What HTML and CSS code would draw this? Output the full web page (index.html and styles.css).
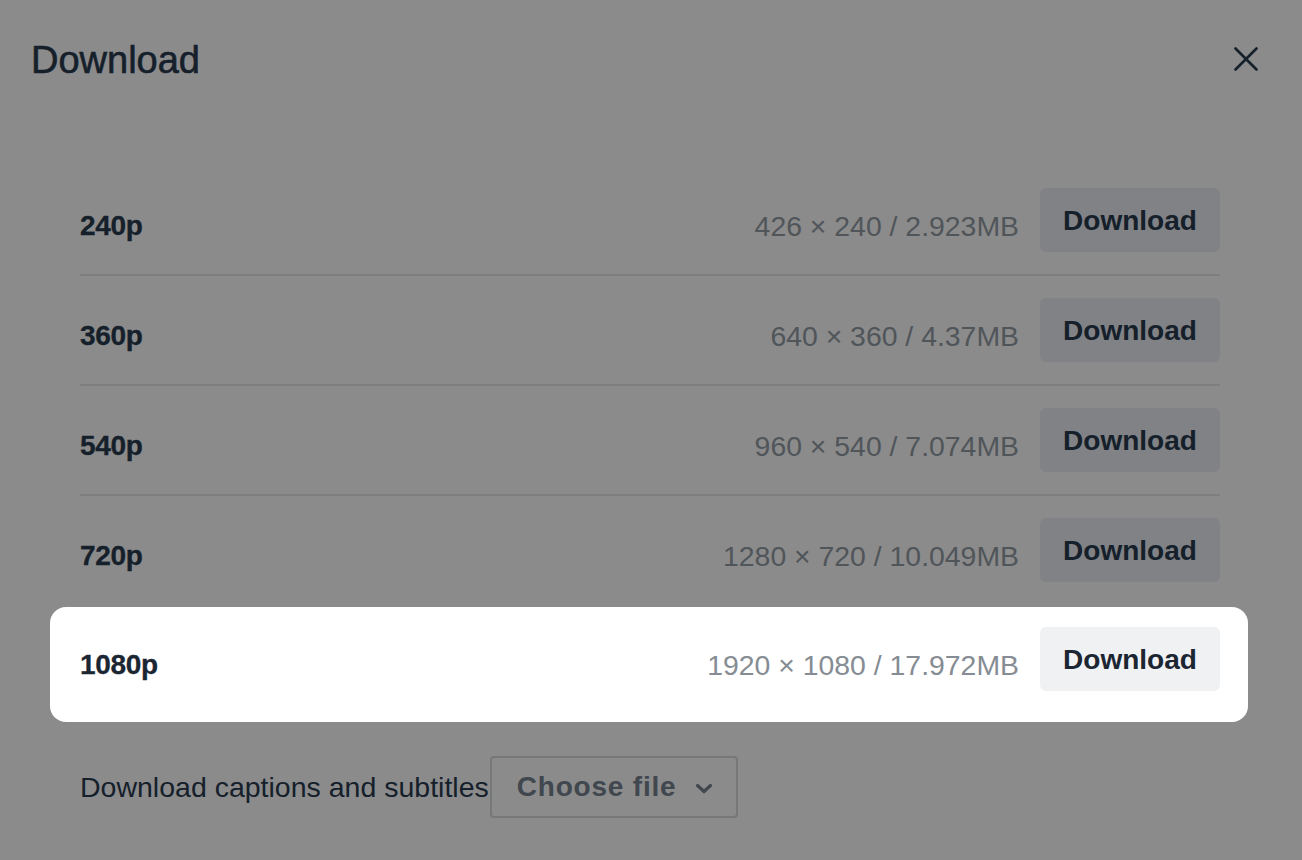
FILE: index.html
```html
<!DOCTYPE html>
<html>
<head>
<meta charset="utf-8">
<link rel="stylesheet" href="styles.css">
</head>
<body>
<div class="dialog">
  <div class="header">
    <h1 class="title">Download</h1>
    <button class="close" aria-label="Close">
      <svg width="24" height="24" viewBox="0 0 24 24"><path d="M1.5 1.5 L22.5 22.5 M22.5 1.5 L1.5 22.5" stroke="#15202b" stroke-width="2.6" stroke-linecap="round" fill="none"/></svg>
    </button>
  </div>
  <div class="list">
    <div class="row">
      <div class="label">240p</div>
      <div class="dims">426 × 240 / 2.923MB</div>
      <button class="dl">Download</button>
    </div>
    <div class="row">
      <div class="label">360p</div>
      <div class="dims">640 × 360 / 4.37MB</div>
      <button class="dl">Download</button>
    </div>
    <div class="row">
      <div class="label">540p</div>
      <div class="dims">960 × 540 / 7.074MB</div>
      <button class="dl">Download</button>
    </div>
    <div class="row last">
      <div class="label">720p</div>
      <div class="dims">1280 × 720 / 10.049MB</div>
      <button class="dl">Download</button>
    </div>
    <div class="spot">
      <div class="row last">
        <div class="label">1080p</div>
        <div class="dims">1920 × 1080 / 17.972MB</div>
        <button class="dl">Download</button>
      </div>
    </div>
    <div class="captions">
      <span class="cap-text">Download captions and subtitles</span>
      <button class="select">Choose file
        <svg width="18" height="12" viewBox="0 0 18 12"><path d="M2.5 2.5 L9 8.5 L15.5 2.5" stroke="#40474e" stroke-width="3.2" stroke-linecap="round" stroke-linejoin="round" fill="none"/></svg>
      </button>
    </div>
  </div>
</div>
</body>
</html>
```
FILE: styles.css
```css
html, body {
  margin: 0;
  padding: 0;
}
body {
  background: #8b8b8b;
  font-family: "Liberation Sans", Arial, sans-serif;
  color: #15202b;
  width: 1302px;
  height: 860px;
  overflow: hidden;
}
.dialog {
  padding: 38px 44px 0 31px;
}
.header {
  display: flex;
  justify-content: space-between;
  align-items: flex-start;
}
.title {
  margin: 0;
  font-size: 38px;
  line-height: 44px;
  font-weight: 500;
  color: #15202b;
  -webkit-text-stroke: 0.6px #15202b;
}
.close {
  border: 0;
  background: none;
  padding: 0;
  margin-top: 9px;
  width: 24px;
  height: 24px;
  display: flex;
}
.list {
  margin: 84px 38px 0 49px;
}
.row {
  display: flex;
  align-items: flex-start;
  height: 108px;
  border-bottom: 2px solid #7e7e7e;
}
.row.last {
  border-bottom: 0;
  height: 110px;
}
.label {
  font-size: 28px;
  line-height: 32px;
  font-weight: 700;
  margin-top: 44px;
  letter-spacing: -0.3px;
  flex: 1;
  -webkit-text-stroke: 0.3px currentColor;
}
.dims {
  font-size: 28.4px;
  line-height: 32px;
  margin-top: 44px;
  color: #50555a;
  margin-right: 21px;
}
.dl {
  margin-top: 22px;
  width: 180px;
  height: 64px;
  border: 0;
  border-radius: 6px;
  background: #808285;
  font-family: "Liberation Sans", Arial, sans-serif;
  font-size: 28px;
  font-weight: 700;
  color: #15202b;
  padding: 2px 0 0;
}
.spot {
  background: #ffffff;
  border-radius: 16px;
  margin: 1px -28px 0 -30px;
  padding: 0 28px 5px 30px;
}
.spot .label {
  color: #1b2632;
  margin-top: 42px;
}
.spot .dims {
  color: #868c93;
  margin-top: 42px;
}
.spot .dl {
  margin-top: 20px;
  background: #f0f1f3;
  color: #1b2632;
}
.captions {
  display: flex;
  align-items: center;
  margin-top: 34px;
}
.cap-text {
  font-size: 28.5px;
  line-height: 32px;
  color: #15202b;
}
.select {
  margin-left: 1px;
  height: 62px;
  width: 248px;
  box-sizing: border-box;
  border: 2px solid #767778;
  border-radius: 4px;
  background: transparent;
  padding: 0 0 0 25px;
  display: flex;
  align-items: center;
  gap: 19px;
  font-family: "Liberation Sans", Arial, sans-serif;
  font-size: 28px;
  font-weight: 700;
  letter-spacing: 0.8px;
  color: #40474e;
}
.select svg {
  margin-top: 4px;
}
```
